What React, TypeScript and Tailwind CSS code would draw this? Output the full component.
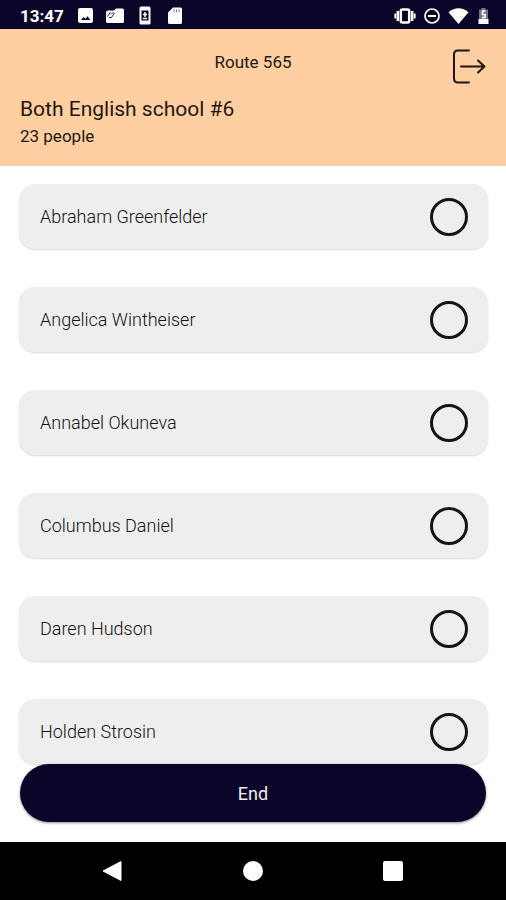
const people = [
  'Abraham Greenfelder',
  'Angelica Wintheiser',
  'Annabel Okuneva',
  'Columbus Daniel',
  'Daren Hudson',
  'Holden Strosin',
];

function StatusBar() {
  return (
    <div className="flex h-[29px] items-center justify-between bg-[#0b0529] pt-[2px] pr-[17px] pl-5 text-white">
      <div className="flex items-center">
        <span className="w-[58px] text-[17px] leading-[22px] font-bold">13:47</span>
        <svg width="15" height="15" viewBox="0 0 15 15" aria-hidden="true">
          <rect width="15" height="15" rx="2" fill="currentColor" />
          <path d="M3 12l2.500-3 2 1.800 2-2.500 2.800 3.700z" fill="#0b0529" />
        </svg>
        <svg className="ml-[13px]" width="18" height="15" viewBox="0 0 18 15" aria-hidden="true">
          <path d="M2 2.500h6l2-2h6.500A1.500 1.500 0 0 1 18 2v11.500a1.500 1.500 0 0 1-1.500 1.500h-15A1.500 1.500 0 0 1 0 13.500V4.500a2 2 0 0 1 2-2z" fill="currentColor" />
          <path d="M1.500 8.500l3-4.500M3 9.500h2.500l3-4.500M5 6.500l2.500-2.500" stroke="#0b0529" strokeWidth="0.900" fill="none" />
        </svg>
        <svg className="ml-[15px]" width="12" height="19" viewBox="0 0 12 19" aria-hidden="true">
          <rect x="0.500" y="0.500" width="11" height="18" rx="1.500" fill="currentColor" />
          <rect x="2.500" y="4.500" width="7" height="10" fill="#0b0529" />
          <path d="M6 6v5M4 8.500h4M4 12.500h4" stroke="currentColor" strokeWidth="1.500" />
        </svg>
        <svg className="ml-[17px]" width="14" height="17" viewBox="0 0 14 17" aria-hidden="true">
          <path d="M5 0.500h7.500A1.500 1.500 0 0 1 14 2v13.500a1.500 1.500 0 0 1-1.500 1.500h-11A1.500 1.500 0 0 1 0 15.500V5.500z" fill="currentColor" />
          <path d="M6 2.500v2.500M8.500 2.500v2.500M11 2.500v2.500" stroke="#0b0529" strokeWidth="1" opacity="0.600" />
        </svg>
      </div>
      <div className="flex items-center">
        <svg width="22" height="16" viewBox="0 0 22 16" aria-hidden="true">
          <rect x="6.800" y="1.500" width="8.400" height="13" rx="1.500" fill="none" stroke="currentColor" strokeWidth="2.500" />
          <path d="M3.800 3v10M18.200 3v10" stroke="currentColor" strokeWidth="2.500" />
          <path d="M1.300 5.500v5M20.700 5.500v5" stroke="currentColor" strokeWidth="1.800" />
        </svg>
        <svg className="ml-2" width="16" height="16" viewBox="0 0 16 16" aria-hidden="true">
          <circle cx="8" cy="8" r="7" fill="none" stroke="currentColor" strokeWidth="1.700" />
          <path d="M4 8h8" stroke="currentColor" strokeWidth="2" />
        </svg>
        <svg className="ml-2" width="21" height="16" viewBox="0 0 21 16" aria-hidden="true">
          <path d="M0.500 4.200C6.500-1 14.500-1 20.500 4.200L10.500 16z" fill="currentColor" />
        </svg>
        <svg className="ml-[9px]" width="11" height="16" viewBox="0 0 11 16" aria-hidden="true">
          <path d="M3.500 0h4v1.500H10V11H1V1.500h2.500z" fill="currentColor" opacity="0.450" />
          <path d="M0.500 11h10v5h-10z" fill="currentColor" />
          <path d="M7.500 3h-3v3.500h2.500v3h-3" stroke="currentColor" strokeWidth="1.600" fill="none" />
        </svg>
      </div>
    </div>
  );
}

function RouteHeader() {
  return (
    <header className="bg-[#ffcfa1] px-5 pt-4 pb-[17px] text-[#1d1712]">
      <div className="grid grid-cols-[1fr_auto_1fr] items-start">
        <h1 className="col-start-2 text-[17px] leading-[34px]">Route 565</h1>
        <button type="button" aria-label="Log out" className="mt-1 h-9 w-[34px] justify-self-end">
          <svg width="34" height="36" viewBox="0 0 34 36" fill="none" stroke="currentColor" strokeWidth="2" strokeLinecap="round" strokeLinejoin="round" aria-hidden="true">
            <path d="M17 1.500H6Q2 1.500 2 5.500V29.500Q2 33.500 6 33.500H17" />
            <path d="M9 17.500H32M26 11.500L32.500 17.500L26 23.500" />
          </svg>
        </button>
      </div>
      <h2 className="mt-[10px] text-[21px] leading-[28px]">Both English school #6</h2>
      <p className="text-[17px] leading-[26px]">23 people</p>
    </header>
  );
}

function PersonRow({ name }: { name: string }) {
  return (
    <li>
      <label className="flex h-[65px] items-center justify-between rounded-[16px] bg-[#eeeeee] pr-5 pl-[21px] text-[18px] font-light text-[#111111] shadow-[0_1px_2px_rgba(0,0,0,0.15)]">
        {name}
        <input
          type="checkbox"
          className="size-[38px] appearance-none rounded-full border-[3px] border-[#151515] checked:bg-[#0b0529]"
        />
      </label>
    </li>
  );
}

function NavigationBar() {
  return (
    <nav className="flex h-[58px] items-center justify-center gap-[120px] bg-black text-white">
      <button type="button" aria-label="Back" className="size-5">
        <svg width="20" height="20" viewBox="0 0 20 20" aria-hidden="true">
          <path d="M18 0.500V19.500L0 10z" fill="currentColor" stroke="currentColor" strokeLinejoin="round" />
        </svg>
      </button>
      <button type="button" aria-label="Home" className="size-5 rounded-full bg-white" />
      <button type="button" aria-label="Recent apps" className="size-5 rounded-[2px] bg-white" />
    </nav>
  );
}

export default function App() {
  return (
    <div className="flex min-h-screen flex-col bg-white font-[Roboto,sans-serif]">
      <StatusBar />
      <RouteHeader />
      <main className="flex flex-1 flex-col">
        <ul className="flex flex-col gap-[38px] pt-[18px] pr-[18px] pl-[19px]">
          {people.map((name) => (
            <PersonRow key={name} name={name} />
          ))}
        </ul>
        <div className="mt-auto px-5 pb-5">
          <button
            type="button"
            className="h-[58px] w-full rounded-full bg-[#0b0529] text-[18px] text-[#eeeeee] shadow-[0_1px_3px_rgba(0,0,0,0.45)]"
          >
            End
          </button>
        </div>
      </main>
      <NavigationBar />
    </div>
  );
}
